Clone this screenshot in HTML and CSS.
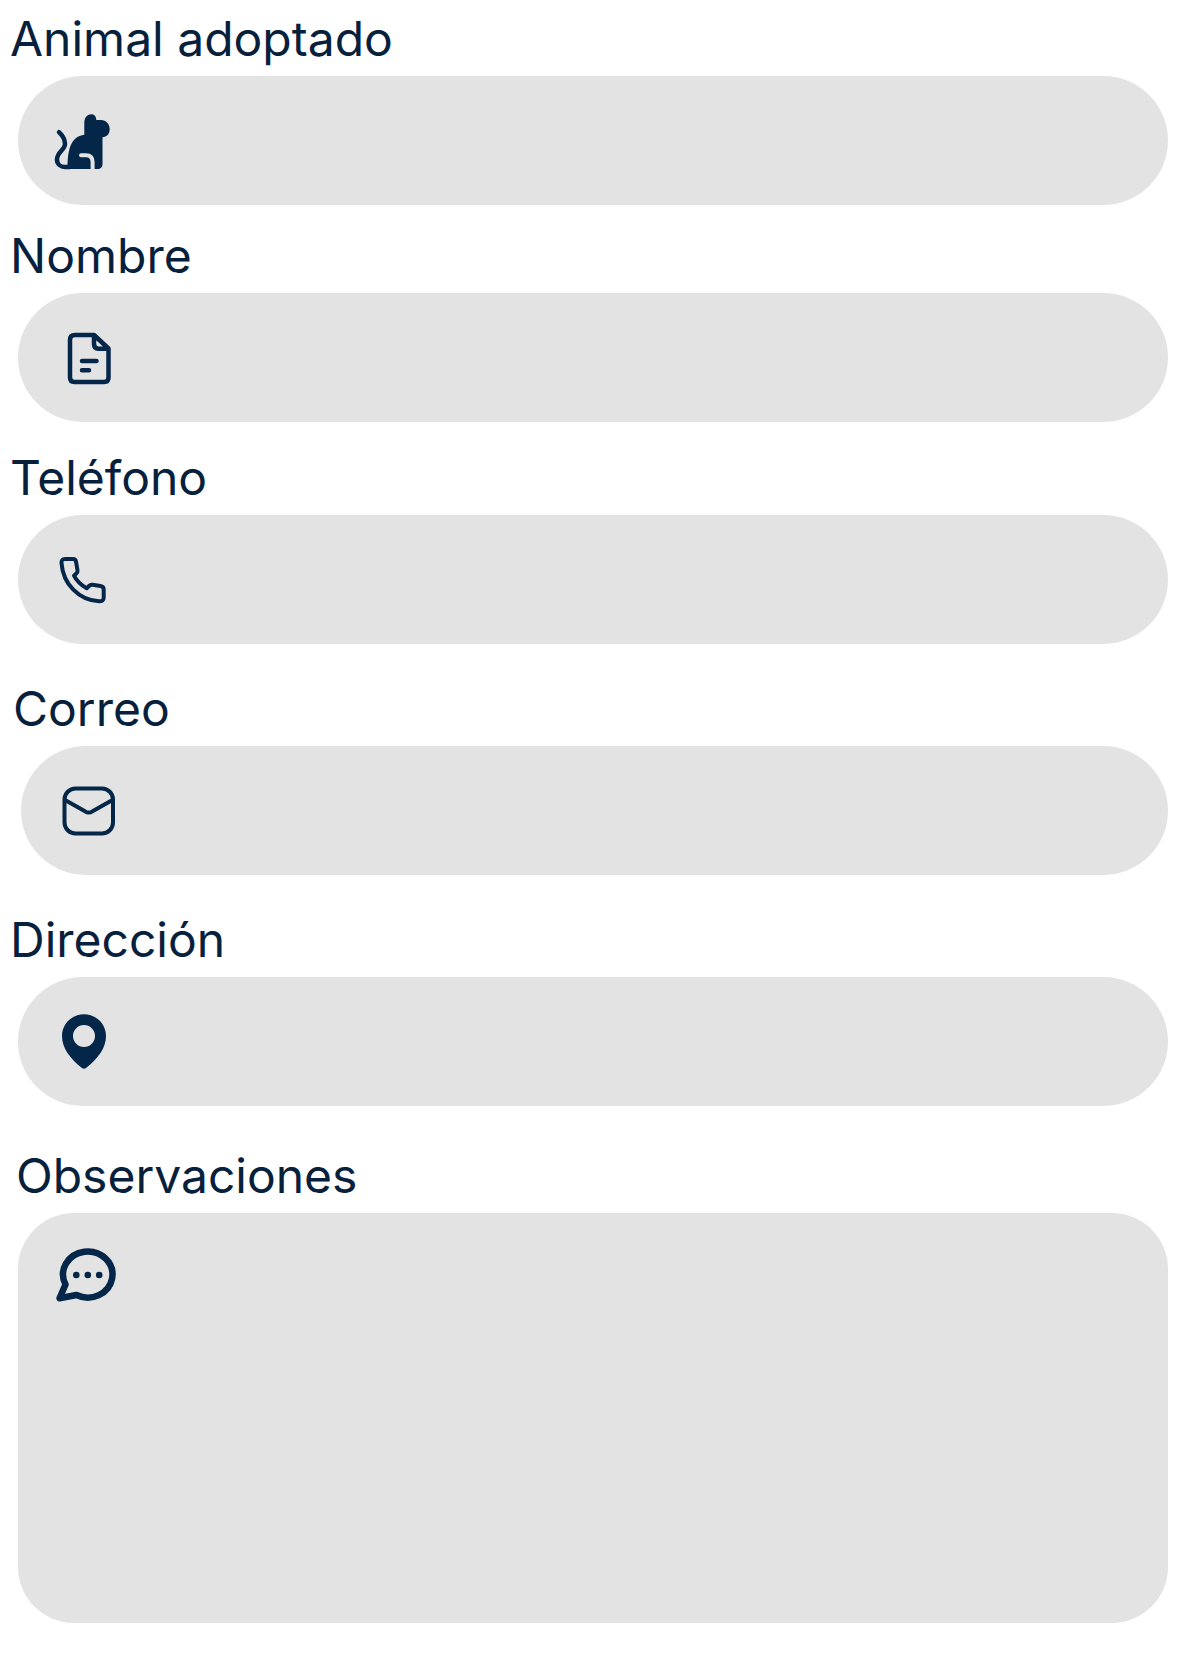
FILE: index.html
```html
<!DOCTYPE html>
<html lang="es">
<head>
<meta charset="utf-8">
<meta name="viewport" content="width=device-width, initial-scale=1">
<title>Formulario de adopción</title>
<link rel="stylesheet" href="styles.css">
</head>
<body>
<form class="form">
  <div class="field">
    <label class="label" for="animal">Animal adoptado</label>
    <div class="control">
      <svg class="icon" viewBox="0 0 64 64" aria-hidden="true">
        <path class="solid" d="M13.5 60C13.5 40 17 27.500 30.300 25.700V14C30.300 8.500 33.500 5.200 37.500 5.200C40.500 5.200 42.300 7.500 42.300 11H47C52 11 55.700 15 55.700 20C55.700 25 52.800 28 48.500 28.300V55C48.500 58.500 46.500 60 43.500 60Z"/>
        <path class="line w4" d="M5 23.200C8.500 26.500 11 31 11 35C11 41 3 43 3 50.500C3 55 6.500 58 11 58H16"/>
        <path class="cut" d="M27 46.200H32C36.500 46.200 38.600 49 38.600 53V61"/>
      </svg>
      <input class="input" id="animal" type="text">
    </div>
  </div>

  <div class="field gap-s">
    <label class="label" for="nombre">Nombre</label>
    <div class="control">
      <svg class="icon" viewBox="0 0 64 64" aria-hidden="true">
        <path class="line w4" d="M21 9H40L54.500 22.500V51.500Q54.500 56 50 56H20.500Q16 56 16 51.500V14Q16 9 21 9ZM40 9V18Q40 22.700 44.500 22.700H54M28 35H42.500M28 44.300H35"/>
      </svg>
      <input class="input" id="nombre" type="text">
    </div>
  </div>

  <div class="field gap-m">
    <label class="label" for="telefono">Teléfono</label>
    <div class="control">
      <svg class="icon" viewBox="0 0 64 64" aria-hidden="true">
        <path class="line w3" d="M11 11H19Q21.500 11 22 13.500L23.500 22.500Q23.700 24.300 22.500 25.300L20 27.700Q24 35.500 32.700 40.300L35 38Q36.500 36.500 38.500 36.800L46.500 38Q49.700 38.500 49.700 41.500V49.500Q49.700 53.500 45 53.300C25 52.500 9 36 7.500 15Q7.300 11 11 11Z"/>
      </svg>
      <input class="input" id="telefono" type="tel">
    </div>
  </div>

  <div class="field gap-l indent">
    <label class="label" for="correo">Correo</label>
    <div class="control">
      <svg class="icon" viewBox="0 0 64 64" aria-hidden="true">
        <rect class="line w3" x="7.500" y="9.500" width="48.500" height="45" rx="11"/>
        <path class="line w3" d="M8 21L28 32.300Q31.700 34.800 35.500 32.300L55.500 21"/>
      </svg>
      <input class="input" id="correo" type="email">
    </div>
  </div>

  <div class="field gap-l">
    <label class="label" for="direccion">Dirección</label>
    <div class="control">
      <svg class="icon" viewBox="0 0 64 64" aria-hidden="true">
        <path class="solid" fill-rule="evenodd" d="M30 4.300C42 4.300 52 13.500 52 26C52 38 44 48.500 32 58Q30 59.500 28 58C16 48.500 8 38 8 26C8 13.500 18 4.300 30 4.300ZM30 15A11 11 0 1 0 30 37A11 11 0 1 0 30 15Z"/>
      </svg>
      <input class="input" id="direccion" type="text">
    </div>
  </div>

  <div class="field gap-xl">
    <label class="label inset" for="observaciones">Observaciones</label>
    <div class="control tall">
      <svg class="icon" viewBox="0 0 64 64" aria-hidden="true">
        <path class="line w6" d="M11.500 39.500A24.700 23 0 1 1 22.500 50L5.500 53.200Z"/>
        <circle class="solid" cx="22.300" cy="30" r="3.300"/>
        <circle class="solid" cx="33.800" cy="30" r="3.300"/>
        <circle class="solid" cx="45.200" cy="30" r="3.300"/>
      </svg>
      <textarea class="input" id="observaciones"></textarea>
    </div>
  </div>
</form>
</body>
</html>
```
FILE: styles.css
```css
* {
  box-sizing: border-box;
}

body {
  margin: 0;
  background: #fff;
  color: #07213d;
  font-family: Inter, "Liberation Sans", sans-serif;
}

.form {
  display: flex;
  flex-direction: column;
  padding: 10px 15px 31px 10px;
}

.field {
  display: flex;
  flex-direction: column;
  gap: 8px;
}

.gap-s { margin-top: 22px; }
.gap-m { margin-top: 27px; }
.gap-l { margin-top: 36px; }
.gap-xl { margin-top: 41px; }
.indent { padding-left: 3px; }

.label {
  font-size: 48px;
  line-height: 58px;
}

.inset { padding-left: 6px; }

.control {
  display: flex;
  align-items: center;
  gap: 16px;
  height: 129px;
  margin-left: 8px;
  padding: 1px 36px 0;
  border-radius: 65px;
  background: #e3e3e3;
}

.control:focus-within {
  outline: 3px solid #042649;
}

.tall {
  align-items: flex-start;
  height: 410px;
  padding: 32px 36px;
  border-radius: 56px;
}

.icon {
  flex: none;
  width: 64px;
  height: 64px;
}

.solid { fill: #042649; }

.line,
.cut {
  fill: none;
  stroke: #042649;
  stroke-linecap: round;
  stroke-linejoin: round;
}

.w3 { stroke-width: 4px; }
.w4 { stroke-width: 4.500px; }
.w6 { stroke-width: 6.500px; }

.cut {
  stroke: #e3e3e3;
  stroke-width: 4px;
}

.input {
  flex: 1;
  align-self: stretch;
  min-width: 0;
  padding: 0;
  border: 0;
  outline: 0;
  background: transparent;
  color: inherit;
  font: inherit;
  font-size: 40px;
  resize: none;
}
```
